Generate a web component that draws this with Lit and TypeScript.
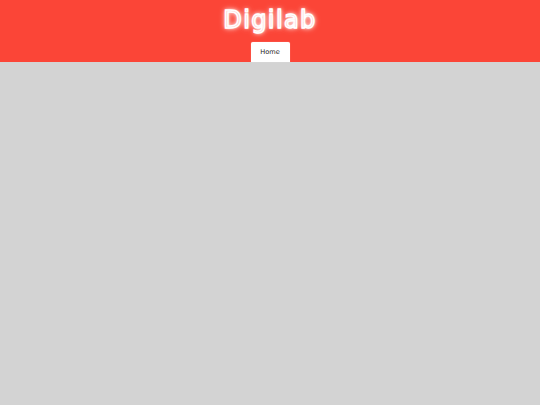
import { LitElement, html, css } from "lit";
import { customElement } from "lit/decorators.js";

@customElement("app-root")
export class AppRoot extends LitElement {
  static styles = css`
    :host { display: flex; flex-direction: column; width: 540px; height: 405px; background: #d3d3d3; font-family: "DejaVu Sans", sans-serif; }
    .head { height: 62px; background: #fb4537; display: flex; flex-direction: column; align-items: center; }
    .logo { height: 42px; display: flex; align-items: center; justify-content: center; font-weight: 400; font-size: 24px; line-height: 1; letter-spacing: 1.4px; color: #fdd3cf; padding-bottom: 3px; box-sizing: border-box;
      -webkit-text-stroke: 1.4px #fff; text-shadow: 0 0 2px #fff, 0 0 4px #fff, 0 0 6px rgba(255,255,255,.8); }
    .tab { width: 39px; height: 20px; background: #fff; border-radius: 2px 2px 0 0; display: flex; align-items: center; justify-content: center; font-size: 6.6px; color: #222; box-shadow: 0 0 1px rgba(255,255,255,.6); }
  `;
  render() {
    return html`<header class="head"><div class="logo">Digilab</div><nav class="tab">Home</nav></header>`;
  }
}
